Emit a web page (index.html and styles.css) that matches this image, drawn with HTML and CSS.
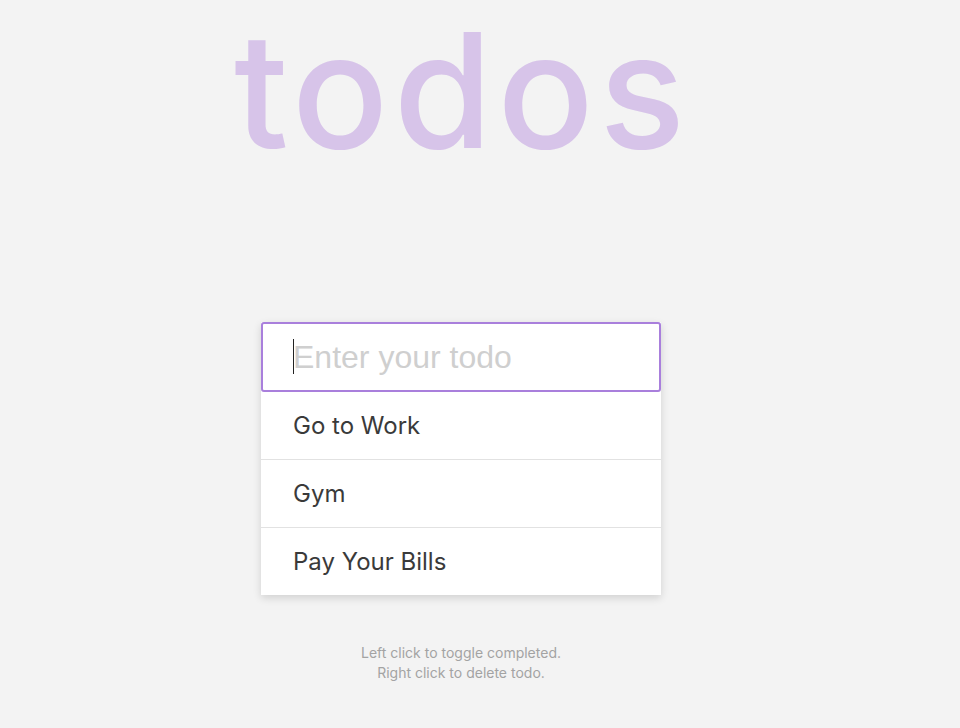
FILE: index.html
```html
<!DOCTYPE html>
<html lang="en">
<head>
<meta charset="utf-8">
<title>todos</title>
<link rel="stylesheet" href="styles.css">
</head>
<body>
<div class="app">
  <h1 class="title">todos</h1>
  <form class="card">
    <div class="input-wrap">
      <span class="caret"></span>
      <input class="new-todo" type="text" placeholder="Enter your todo">
    </div>
    <ul class="list">
      <li class="item">Go to Work</li>
      <li class="item">Gym</li>
      <li class="item">Pay Your Bills</li>
    </ul>
  </form>
  <p class="hint">Left click to toggle completed.<br>Right click to delete todo.</p>
</div>
</body>
</html>
```
FILE: styles.css
```css
html, body {
  margin: 0;
  padding: 0;
  background: #f3f3f3;
}
body {
  font-family: Inter, "Open Sans", sans-serif;
  height: 728px;
  overflow: hidden;
}
.app {
  width: 922px;
  display: flex;
  flex-direction: column;
  align-items: center;
}
.title {
  margin: 10px 0 0 2px;
  font-size: 160px;
  line-height: 160px;
  font-weight: 550;
  color: #d7c4e9;
  letter-spacing: 5px;
}
.card {
  margin: 152px 0 0;
  width: 400px;
  background: #fff;
  box-shadow: 0 3px 8px rgba(0, 0, 0, 0.14);
}
.input-wrap {
  position: relative;
  box-sizing: border-box;
  height: 70px;
  border: 2px solid #a97fdc;
  border-radius: 3px;
  background: #fff;
}
.new-todo {
  box-sizing: border-box;
  width: 100%;
  height: 100%;
  border: none;
  outline: none;
  background: transparent;
  padding: 0 0 0 30px;
  font-family: "Liberation Sans", Arial, sans-serif;
  font-size: 32px;
  color: #333;
}
.new-todo::placeholder {
  color: #cfcfcf;
}
.caret {
  position: absolute;
  left: 30px;
  top: 15px;
  width: 1px;
  height: 35px;
  background: #222;
}
.list {
  list-style: none;
  margin: 0;
  padding: 0;
}
.item {
  box-sizing: border-box;
  height: 68px;
  display: flex;
  align-items: center;
  padding-left: 32px;
  font-size: 24px;
  color: #3a3a3a;
  border-top: 1px solid #e2e2e2;
}
.item:first-child {
  border-top: none;
  height: 67px;
}
.hint {
  margin: 48px 0 0;
  font-size: 14px;
  line-height: 20px;
  color: #a3a3a3;
  text-align: center;
}
```
